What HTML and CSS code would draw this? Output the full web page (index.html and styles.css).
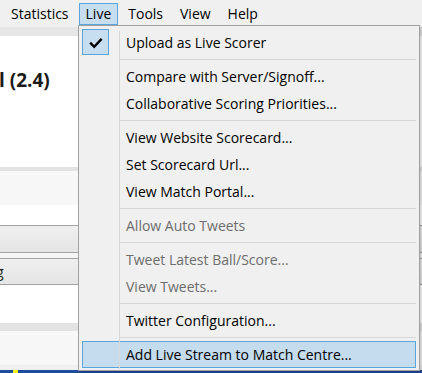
FILE: index.html
```html
<!DOCTYPE html>
<html>
<head>
<meta charset="utf-8">
<link rel="stylesheet" href="styles.css">
</head>
<body>
<div class="app">
  <div class="menubar">
    <span class="mi">Statistics</span>
    <span class="mi active">Live</span>
    <span class="mi">Tools</span>
    <span class="mi">View</span>
    <span class="mi">Help</span>
  </div>
  <div class="band-top"></div>
  <div class="score"><span class="score-text">l (2.4)</span></div>
  <div class="split"></div>
  <div class="light"></div>
  <div class="white1"></div>
  <div class="hdr"></div>
  <div class="gap"></div>
  <div class="hdr hdr2"><span class="g">g</span></div>
  <div class="white2"></div>
  <div class="split2"></div>
  <div class="light2"></div>
  <div class="statusbar"><span class="ico"></span></div>

  <div class="popup">
    <div class="item"><span class="gut"><span class="chk"><svg width="25" height="24" viewBox="0 0 25 24"><polyline points="8,13.5 11.2,16.8 17.8,9.8" fill="none" stroke="#000" stroke-width="2.4" stroke-linecap="square"/></svg></span></span><span class="txt">Upload as Live Scorer</span></div>
    <div class="sep"></div>
    <div class="item"><span class="gut"></span><span class="txt">Compare with Server/Signoff...</span></div>
    <div class="item"><span class="gut"></span><span class="txt">Collaborative Scoring Priorities...</span></div>
    <div class="sep"></div>
    <div class="item"><span class="gut"></span><span class="txt">View Website Scorecard...</span></div>
    <div class="item"><span class="gut"></span><span class="txt">Set Scorecard Url...</span></div>
    <div class="item"><span class="gut"></span><span class="txt">View Match Portal...</span></div>
    <div class="sep"></div>
    <div class="item disabled"><span class="gut"></span><span class="txt">Allow Auto Tweets</span></div>
    <div class="sep"></div>
    <div class="item disabled"><span class="gut"></span><span class="txt">Tweet Latest Ball/Score...</span></div>
    <div class="item disabled"><span class="gut"></span><span class="txt">View Tweets...</span></div>
    <div class="sep"></div>
    <div class="item"><span class="gut"></span><span class="txt">Twitter Configuration...</span></div>
    <div class="sep"></div>
    <div class="item hot"><span class="gut"></span><span class="txt">Add Live Stream to Match Centre...</span></div>
  </div>
</div>
</body>
</html>
```

FILE: styles.css
```css
html, body {
  margin: 0;
  padding: 0;
}
body {
  width: 422px;
  height: 373px;
  overflow: hidden;
  font-family: "Open Sans", "Noto Sans", sans-serif;
  font-size: 14px;
  color: #000;
  background: #f0f0f0;
}
.app {
  position: relative;
  width: 422px;
  height: 373px;
  overflow: hidden;
}
.menubar {
  height: 27px;
  box-sizing: border-box;
  padding: 3px 0 0 4px;
  display: flex;
  gap: 3px;
  background: #f0f0f0;
}
.mi {
  height: 22px;
  box-sizing: border-box;
  line-height: 20px;
  padding: 0 6px;
  border: 1px solid transparent;
  white-space: nowrap;
}
.mi.active {
  background: #c7def0;
  border-color: #5aa5dc;
}
.band-top {
  height: 9px;
  background: #e6e6e6;
}
.score {
  height: 131px;
  box-sizing: border-box;
  background: #fff;
  padding-top: 32px;
}
.score-text {
  display: block;
  font-weight: 700;
  font-size: 19px;
  line-height: 25px;
  color: #1a1a1a;
  margin-left: -1px;
  white-space: nowrap;
}
.split {
  height: 4px;
  background: #e3e3e3;
}
.light {
  height: 34px;
  background: #f7f7f7;
}
.white1 {
  height: 20px;
  background: #fff;
}
.hdr {
  height: 28px;
  box-sizing: border-box;
  border-top: 1px solid #a3a3a3;
  border-bottom: 1px solid #a3a3a3;
  background: linear-gradient(#efefef, #e5e5e5);
}
.hdr2 {
  height: 27px;
  line-height: 25px;
}
.g {
  display: inline-block;
  margin-left: -4px;
  color: #1a1a1a;
}
.gap {
  height: 5px;
  background: #f5f5f5;
}
.white2 {
  height: 38px;
  background: #fff;
}
.split2 {
  height: 8px;
  background: #e3e3e3;
}
.light2 {
  height: 34px;
  background: #f7f7f7;
}
.statusbar {
  height: 10px;
  background: #1f4c9a;
  padding-left: 13px;
}
.ico {
  display: block;
  width: 5px;
  height: 4px;
  margin-top: 5px;
  background: #f5f01a;
}
.popup {
  position: absolute;
  left: 78px;
  top: 25px;
  width: 342px;
  height: 346px;
  box-sizing: border-box;
  border: 1px solid #a0a0a0;
  background: #f0f0f0;
  padding: 3px 3px 2px 3px;
  box-shadow: 2px 2px 2px rgba(0, 0, 0, 0.18);
}
.popup::before {
  content: "";
  position: absolute;
  left: 40px;
  top: 5px;
  bottom: 1px;
  width: 1px;
  background: #d9d9d9;
  z-index: 2;
}
.item {
  height: 27px;
  box-sizing: border-box;
  display: flex;
  align-items: center;
  line-height: 27px;
  white-space: nowrap;
}
.gut {
  width: 37px;
  height: 27px;
  flex: none;
}
.chk {
  display: block;
  width: 27px;
  height: 26px;
  box-sizing: border-box;
  border: 1px solid #5aa5dc;
  background: #c7def0;
}
.chk svg {
  display: block;
}
.txt {
  padding-left: 7px;
}
.disabled {
  color: #6d6d6d;
}
.hot {
  background: #c4dcee;
  border: 1px solid #5aa5dc;
}
.hot .gut {
  width: 36px;
  height: 25px;
}
.hot .txt {
  line-height: 25px;
}
.sep {
  height: 7px;
  display: flex;
  align-items: center;
  padding-left: 37px;
}
.sep::after {
  content: "";
  flex: 1;
  height: 1px;
  background: #d7d7d7;
}
```
